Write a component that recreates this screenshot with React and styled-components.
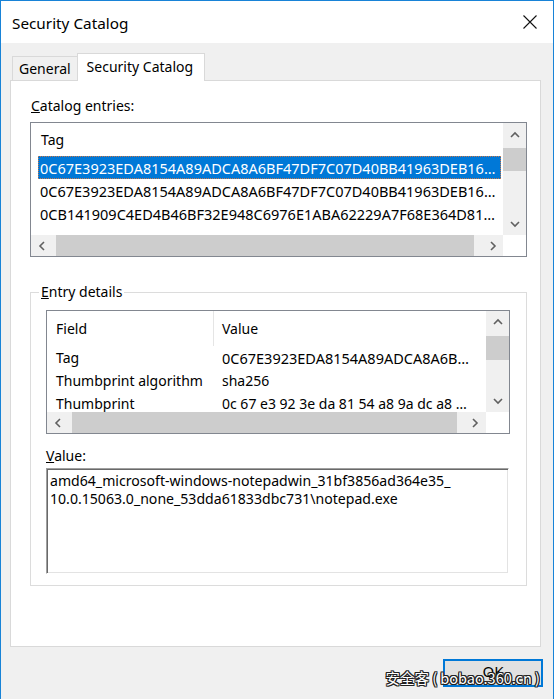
import React from 'react';
import styled, { createGlobalStyle } from 'styled-components';

const GlobalStyle = createGlobalStyle`
  html, body {
    margin: 0;
    padding: 0;
    background: #f0f0f0;
  }
  body {
    font-family: "Noto Sans", "Open Sans", sans-serif;
    color: #000;
  }
`;

const Window = styled.div`
  position: relative;
  width: 554px;
  height: 699px;
  box-sizing: border-box;
  border: 1px solid #1883d7;
  border-bottom: none;
  display: flex;
  flex-direction: column;
  background: #f0f0f0;
  font-size: 14px;
  overflow: hidden;
`;

const TitleBar = styled.div`
  height: 42px;
  flex: none;
  background: #fff;
  display: flex;
  align-items: center;
  justify-content: space-between;
  padding-left: 11px;
`;

const Title = styled.span`
  font-size: 15.3px;
  line-height: 20px;
  margin-top: 1px;
`;

const CloseButton = styled.div`
  width: 46px;
  height: 42px;
  display: flex;
  align-items: center;
  justify-content: center;
`;

const Body = styled.div`
  flex: 1;
  display: flex;
  flex-direction: column;
  padding: 10px 12px 0 9px;
`;

const TabStrip = styled.div`
  display: flex;
  align-items: flex-end;
  height: 27px;
  padding-left: 2px;
`;

const Tab = styled.div`
  box-sizing: border-box;
  border: 1px solid #d9d9d9;
  border-bottom: none;
  display: flex;
  align-items: center;
  white-space: nowrap;
  position: relative;
  background: ${({ $active }) => ($active ? '#fff' : '#f0f0f0')};
  height: ${({ $active }) => ($active ? '28px' : '24px')};
  padding: ${({ $active }) => ($active ? '0 11px 3px 9px' : '0 6px 0 6px')};
  margin-bottom: ${({ $active }) => ($active ? '-1px' : '0')};
  margin-left: ${({ $active }) => ($active ? '-1px' : '0')};
  z-index: ${({ $active }) => ($active ? 1 : 0)};
`;

const Panel = styled.div`
  height: 567px;
  box-sizing: border-box;
  background: #fff;
  border: 1px solid #d9d9d9;
  padding: 15px 13px 0 19px;
  display: flex;
  flex-direction: column;
`;

const Label = styled.div`
  line-height: 20px;
  padding-left: ${({ $indent }) => $indent ?? 1}px;
  margin-top: ${({ $top }) => $top || 0}px;
  margin-bottom: ${({ $gap }) => $gap || 0}px;
`;

const ListBox = styled.div`
  box-sizing: border-box;
  height: ${({ $height }) => $height}px;
  border: 1px solid #828790;
  background: #fff;
  display: grid;
  grid-template-columns: 1fr 23px;
  grid-template-rows: 1fr 21px;
  overflow: hidden;
`;

const ListContent = styled.div`
  overflow: hidden;
  min-width: 0;
`;

const HeaderRow = styled.div`
  display: grid;
  grid-template-columns: ${({ $cols }) => $cols};
  height: ${({ $height }) => $height}px;
  align-items: center;
`;

const HeaderCell = styled.div`
  height: 100%;
  display: flex;
  align-items: center;
  padding-left: ${({ $pad }) => $pad}px;
  border-right: ${({ $divider }) => ($divider ? '1px solid #e5e5e5' : 'none')};
  box-sizing: border-box;
`;

const Row = styled.div`
  display: grid;
  grid-template-columns: ${({ $cols }) => $cols};
  height: 23px;
  align-items: center;
  margin: ${({ $inset }) => $inset};
  box-sizing: border-box;
  background: ${({ $selected }) => ($selected ? '#0078d7' : 'transparent')};
  color: ${({ $selected }) => ($selected ? '#fff' : '#000')};
  outline: ${({ $selected }) => ($selected ? '1px dotted #c8784a' : 'none')};
  outline-offset: -1px;
`;

/* hex strings render a touch wider than the prose labels */
const Cell = styled.div`
  padding-left: ${({ $pad }) => $pad}px;
  white-space: nowrap;
  overflow: hidden;
  text-overflow: ellipsis;
  min-width: 0;
  font-size: ${({ $hex }) => ($hex ? '14.5px' : '14px')};
`;

const Scroll = styled.div`
  display: flex;
  flex-direction: ${({ $vertical }) => ($vertical ? 'column' : 'row')};
  background: #f0f0f0;
  min-width: 0;
  min-height: 0;
`;

const ArrowButton = styled.div`
  flex: none;
  width: ${({ $vertical, $size }) => ($vertical ? '100%' : `${$size}px`)};
  height: ${({ $vertical, $size }) => ($vertical ? `${$size}px` : '100%')};
  display: flex;
  align-items: center;
  justify-content: center;
`;

const Thumb = styled.div`
  flex: none;
  background: #cdcdcd;
  ${({ $vertical, $start, $size }) =>
    $vertical
      ? `margin-top: ${$start}px; height: ${$size}px; width: 100%;`
      : `margin-left: ${$start}px; width: ${$size}px; height: 100%;`}
`;

const Track = styled.div`
  flex: 1;
`;

const Corner = styled.div`
  background: #fff;
`;

const GroupBox = styled.div`
  margin-top: 35px;
  height: 294px;
  box-sizing: border-box;
  border: 1px solid #dcdcdc;
  padding: 0 16px 0 15px;
  display: flex;
  flex-direction: column;
`;

const Caption = styled.div`
  align-self: flex-start;
  background: #fff;
  line-height: 18px;
  margin: -10px 0 9px -7px;
  padding: 0 2px;
`;

const ValueBox = styled.div`
  box-sizing: border-box;
  height: 106px;
  margin-right: 1px;
  background: #fff;
  border: 1px solid;
  border-color: #a0a0a0 #fff #fff #a0a0a0;
  box-shadow: inset 1px 1px 0 #696969, inset -1px -1px 0 #e3e3e3;
  padding: 3px 3px;
  line-height: 18px;
  font-size: 14.1px;
  white-space: pre;
`;

const Footer = styled.div`
  display: flex;
  justify-content: flex-end;
  padding-top: 12px;
  margin-right: -2px;
`;

const OkButton = styled.div`
  width: 100px;
  height: 28px;
  box-sizing: border-box;
  border: 2px solid #0078d7;
  background: #e1e1e1;
  display: flex;
  align-items: center;
  justify-content: center;
  font-size: 15px;
  padding-bottom: 4px;
`;

const Watermark = styled.div`
  position: absolute;
  right: 13px;
  bottom: 11px;
  font-family: "Noto Sans CJK SC", "Noto Sans", sans-serif;
  font-size: 14.5px;
  color: #fff;
  text-shadow: -1px -1px 0 #222, 1px -1px 0 #222, -1px 1px 0 #222, 1px 1px 0 #222,
    0 1px 0 #222, 1px 0 0 #222, -1px 0 0 #222, 0 -1px 0 #222;
  white-space: pre;
`;

const Chevron = ({ dir }) => {
  const pts = {
    up: '1,6 5,2 9,6',
    down: '1,2 5,6 9,2',
    left: '6,1 2,5 6,9',
    right: '2,1 6,5 2,9',
  }[dir];
  const vertical = dir === 'up' || dir === 'down';
  return (
    <svg width={vertical ? 10 : 8} height={vertical ? 8 : 10} viewBox={vertical ? '0 0 10 8' : '0 0 8 10'}>
      <polyline points={pts} fill="none" stroke="#606060" strokeWidth="1.6" />
    </svg>
  );
};

const ScrollBar = ({ vertical, arrow, start, size }) => (
  <Scroll $vertical={vertical}>
    <ArrowButton $vertical={vertical} $size={arrow[0]}>
      <Chevron dir={vertical ? 'up' : 'left'} />
    </ArrowButton>
    <Thumb $vertical={vertical} $start={start} $size={size} />
    <Track />
    <ArrowButton $vertical={vertical} $size={arrow[1]}>
      <Chevron dir={vertical ? 'down' : 'right'} />
    </ArrowButton>
  </Scroll>
);

const catalogEntries = [
  '0C67E3923EDA8154A89ADCA8A6BF47DF7C07D40BB41963DEB1654E2A7C9F',
  '0C67E3923EDA8154A89ADCA8A6BF47DF7C07D40BB41963DEB1654F03B18D',
  '0CB141909C4ED4B46BF32E948C6976E1ABA62229A7F68E364D81A2E55C07',
];

const details = [
  ['Tag', '0C67E3923EDA8154A89ADCA8A6BF47DF7C07D40BB41963DEB16', true],
  ['Thumbprint algorithm', 'sha256', false],
  ['Thumbprint', '0c 67 e3 92 3e da 81 54 a8 9a dc a8 a6 bf 47 df 7c 07', false],
];

const App = () => (
  <>
    <GlobalStyle />
    <Window>
      <TitleBar>
        <Title>Security Catalog</Title>
        <CloseButton>
          <svg width="14" height="14" viewBox="0 0 14 14">
            <path d="M0.5 0.5 L13.5 13.5 M13.5 0.5 L0.5 13.5" stroke="#111" strokeWidth="1.1" />
          </svg>
        </CloseButton>
      </TitleBar>

      <Body>
        <TabStrip>
          <Tab>General</Tab>
          <Tab $active>Security Catalog</Tab>
        </TabStrip>

        <Panel>
          <Label $gap={6}>
            <u>C</u>atalog entries:
          </Label>
          <ListBox $height={135}>
            <ListContent>
              <HeaderRow $cols="1fr" $height={33}>
                <HeaderCell $pad={10}>Tag</HeaderCell>
              </HeaderRow>
              {catalogEntries.map((tag, i) => (
                <Row key={tag} $cols="1fr" $inset="0 2px 0 7px" $selected={i === 0}>
                  <Cell $pad={2} $hex>{tag}</Cell>
                </Row>
              ))}
            </ListContent>
            <ScrollBar vertical arrow={[23, 23]} start={2} size={23} />
            <ScrollBar arrow={[22, 21]} start={3} size={418} />
            <Corner />
          </ListBox>

          <GroupBox>
            <Caption>
              <u>E</u>ntry details
            </Caption>
            <ListBox $height={124}>
              <ListContent>
                <HeaderRow $cols="167px 1fr" $height={35}>
                  <HeaderCell $pad={9} $divider>Field</HeaderCell>
                  <HeaderCell $pad={8}>Value</HeaderCell>
                </HeaderRow>
                {details.map(([field, value, hex]) => (
                  <Row key={field} $cols="167px 1fr" $inset="0 14px 0 0">
                    <Cell $pad={9}>{field}</Cell>
                    <Cell $pad={8} $hex={hex}>{value}</Cell>
                  </Row>
                ))}
              </ListContent>
              <ScrollBar vertical arrow={[22, 22]} start={3} size={24} />
              <ScrollBar arrow={[22, 22]} start={3} size={385} />
              <Corner />
            </ListBox>

            <Label $gap={2} $top={12} $indent={0}>
              <u>V</u>alue:
            </Label>
            <ValueBox>
              {'amd64_microsoft-windows-notepadwin_31bf3856ad364e35_\n10.0.15063.0_none_53dda61833dbc731\\notepad.exe'}
            </ValueBox>
          </GroupBox>
        </Panel>

        <Footer>
          <OkButton>OK</OkButton>
        </Footer>
      </Body>

      <Watermark>安全客 ( bobao.360.cn )</Watermark>
    </Window>
  </>
);

export default App;
